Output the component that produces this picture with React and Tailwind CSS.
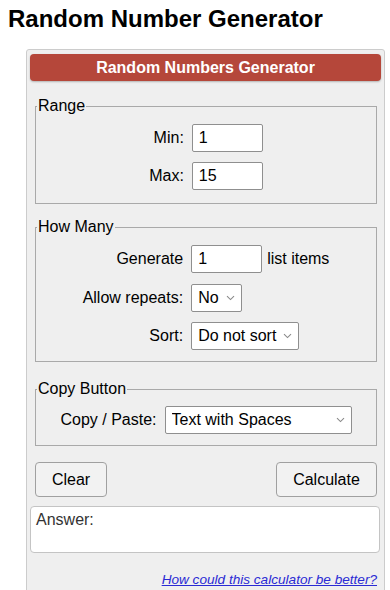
const font = { fontFamily: '"Liberation Sans", Arial, sans-serif' };

const Chevron = () => (
    <svg className="pointer-events-none absolute right-[7px] top-1/2 -translate-y-1/2" width="9" height="6" viewBox="0 0 9 6" fill="none">
        <path d="M1 1.2L4.5 4.6L8 1.2" stroke="#8a8a8a" strokeWidth="1.1" />
    </svg>
);

const Select = ({ value, width }) => (
    <div className={`relative h-[28px] ${width}`}>
        <select
            defaultValue={value}
            className="h-full w-full appearance-none rounded-[2px] border border-[#8f8f8f] bg-white pl-[6px] pr-5 text-[16px] text-black outline-none"
        >
            <option>{value}</option>
        </select>
        <Chevron />
    </div>
);

const TextInput = ({ value }) => (
    <input
        defaultValue={value}
        className="h-[28px] w-[71px] rounded-[2px] border border-[#8f8f8f] bg-white px-[6px] text-[16px] text-black outline-none"
    />
);

const Label = ({ children }) => (
    <span className="justify-self-end text-[16px] text-black">{children}</span>
);

const Group = ({ title, className, children }) => (
    <fieldset className={`ml-[5px] mr-[4px] border border-[#a9a9a9] px-0 ${className}`}>
        <legend className="ml-[1px] px-[1px] text-[16px] leading-[18px] text-black">{title}</legend>
        {children}
    </fieldset>
);

const App = () => {
    return (
        <div className="min-h-screen bg-white" style={font}>
            <h1 className="px-2 pt-[5px] text-[24px] font-bold leading-[27px] text-black">
                Random Number Generator
            </h1>

            <div className="ml-[26px] mt-[17px] w-[359px] rounded-t-[3px] border border-[#cccccc] bg-[#efefef] px-[3px] pt-[4px] pb-8">
                <div className="h-[27px] rounded-[4px] bg-[#b5473a] text-center text-[16px] font-bold leading-[27px] text-white shadow-[0_1px_2px_rgba(0,0,0,0.25)]">
                    Random Numbers Generator
                </div>

                <Group title="Range" className="mt-4 pt-[9px] pb-[13px]">
                    <div className="mx-auto grid w-fit grid-cols-[auto_auto] items-center gap-x-2 gap-y-[10px]">
                        <Label>Min:</Label>
                        <TextInput value="1" />
                        <Label>Max:</Label>
                        <TextInput value="15" />
                    </div>
                </Group>

                <Group title="How Many" className="mt-[14px] pt-[9px] pb-[11px]">
                    <div className="mx-auto grid w-fit grid-cols-[auto_auto] items-center gap-x-2 gap-y-[10.5px]">
                        <Label>Generate</Label>
                        <div className="flex items-center gap-[5px]">
                            <TextInput value="1" />
                            <span className="text-[16px] text-black">list items</span>
                        </div>
                        <Label>Allow repeats:</Label>
                        <Select value="No" width="w-[51px]" />
                        <Label>Sort:</Label>
                        <Select value="Do not sort" width="w-[108px]" />
                    </div>
                </Group>

                <Group title="Copy Button" className="mt-[18px] pt-[8px] pb-[11px]">
                    <div className="mx-auto grid w-fit grid-cols-[auto_auto] items-center gap-x-2">
                        <Label>Copy / Paste:</Label>
                        <Select value="Text with Spaces" width="w-[187px]" />
                    </div>
                </Group>

                <div className="mt-4 flex justify-between pl-[5px] pr-[4px]">
                    <button className="h-[35px] w-[72px] rounded-[4px] border border-[#a0a0a0] bg-[#f2f2f2] text-[16px] text-black">
                        Clear
                    </button>
                    <button className="h-[35px] w-[101px] rounded-[4px] border border-[#a0a0a0] bg-[#f2f2f2] text-[16px] text-black">
                        Calculate
                    </button>
                </div>

                <div className="mt-[9px] mr-px h-[47px] rounded-[4px] border border-[#c4c4c4] bg-white px-[5px] pt-[4px] text-[16px] leading-[18px] text-[#333]">
                    Answer:
                </div>

                <div className="mt-[14px] pr-[4px] text-right">
                    <a href="#" className="text-[13.6px] italic text-[#2a2ad4] underline">
                        How could this calculator be better?
                    </a>
                </div>
            </div>
        </div>
    );
};

export default App;
